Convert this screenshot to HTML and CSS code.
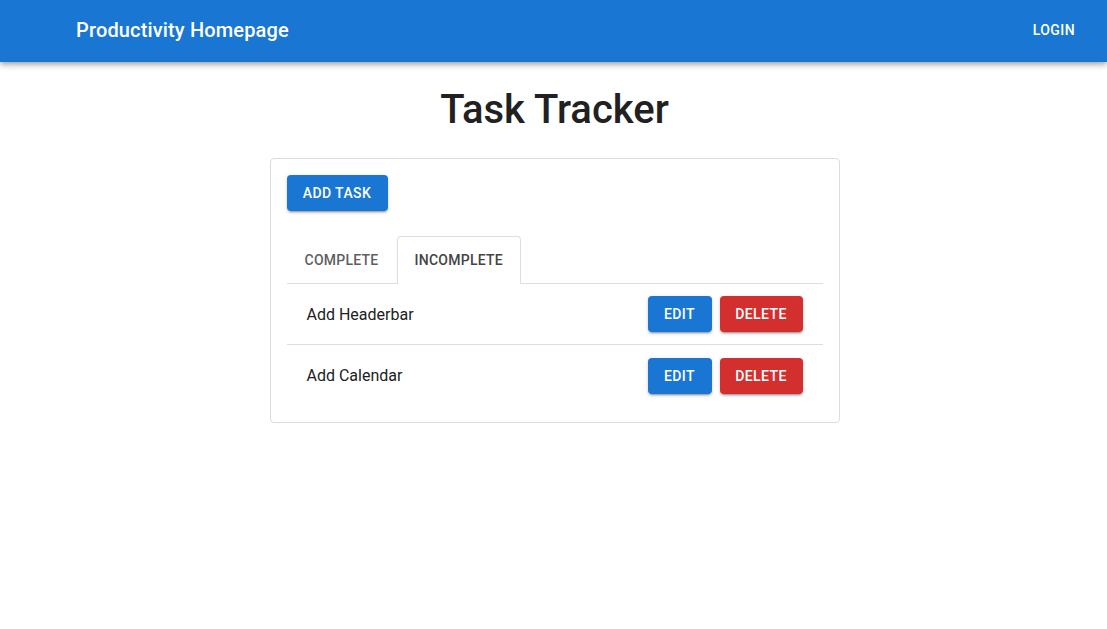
FILE: index.html
```html
<!DOCTYPE html>
<html>
<head>
<meta charset="utf-8">
<link rel="stylesheet" href="styles.css">
</head>
<body>
<header class="appbar">
  <div class="brand">Productivity Homepage</div>
  <button class="login">Login</button>
</header>
<main class="main">
  <h1 class="title">Task Tracker</h1>
  <section class="card">
    <button class="btn btn-blue add">Add Task</button>
    <nav class="tabs">
      <div class="tab">Complete</div>
      <div class="tab active">Incomplete</div>
    </nav>
    <ul class="list">
      <li class="row">
        <span class="task">Add Headerbar</span>
        <div class="actions">
          <button class="btn btn-blue edit">Edit</button>
          <button class="btn btn-red delete">Delete</button>
        </div>
      </li>
      <li class="row">
        <span class="task">Add Calendar</span>
        <div class="actions">
          <button class="btn btn-blue edit">Edit</button>
          <button class="btn btn-red delete">Delete</button>
        </div>
      </li>
    </ul>
  </section>
</main>
</body>
</html>
```
FILE: styles.css
```css
* { box-sizing: border-box; }
body {
  margin: 0;
  font-family: Roboto, "Liberation Sans", Arial, sans-serif;
  color: #212121;
  background: #fff;
}
.appbar {
  height: 62px;
  background: #1976d2;
  color: #fff;
  display: flex;
  align-items: center;
  justify-content: space-between;
  padding: 0 24px 2px 76px;
  box-shadow: 0 2px 4px -1px rgba(0,0,0,0.2), 0 4px 5px 0 rgba(0,0,0,0.14), 0 1px 10px 0 rgba(0,0,0,0.12);
}
.brand {
  font-size: 20px;
  font-weight: 500;
  letter-spacing: 0.15px;
}
.login {
  background: none;
  border: 0;
  color: #fff;
  font-family: inherit;
  font-size: 14px;
  font-weight: 500;
  text-transform: uppercase;
  letter-spacing: 0.4px;
  padding: 6px 8px;
}
.main {
  display: flex;
  flex-direction: column;
  align-items: center;
  padding-left: 2px;
}
.title {
  margin: 24px 0 24px;
  font-size: 40px;
  font-weight: 500;
  line-height: 48px;
  color: #212121;
}
.card {
  width: 570px;
  border: 1px solid #dcdcdc;
  border-radius: 4px;
  padding: 16px;
  display: flex;
  flex-direction: column;
  align-items: flex-start;
}
.btn {
  border: 0;
  border-radius: 4px;
  color: #fff;
  font-family: inherit;
  font-size: 14px;
  font-weight: 500;
  text-transform: uppercase;
  letter-spacing: 0.4px;
  height: 36px;
  padding: 0 8px;
  box-shadow: 0 3px 1px -2px rgba(0,0,0,0.2), 0 2px 2px 0 rgba(0,0,0,0.14), 0 1px 5px 0 rgba(0,0,0,0.12);
}
.btn-blue { background: #1976d2; }
.btn-red { background: #d32f2f; }
.add { width: 101px; }
.edit { width: 64px; }
.delete { width: 83px; }
.tabs {
  margin-top: 25px;
  width: 100%;
  display: flex;
  border-bottom: 1px solid #dedede;
}
.tab {
  height: 47px;
  display: flex;
  align-items: center;
  padding: 0 17px 1px;
  font-size: 14px;
  font-weight: 500;
  text-transform: uppercase;
  letter-spacing: 0.25px;
  color: #5f5f5f;
  border: 1px solid transparent;
  border-bottom: 0;
  border-radius: 4px 4px 0 0;
}
.tab.active {
  border-color: #dedede;
  color: #444;
  margin-bottom: -1px;
  height: 48px;
  padding-bottom: 2px;
  background: #fff;
}
.list {
  list-style: none;
  margin: 0;
  padding: 0;
  width: 100%;
}
.row {
  display: flex;
  align-items: center;
  justify-content: space-between;
  padding: 12px 20px;
  height: 61px;
  border-bottom: 1px solid #dedede;
}
.row:last-child { border-bottom: 0; height: 61px; }
.task {
  font-size: 16px;
  color: #212121;
}
.actions {
  display: flex;
  gap: 8px;
}
```
